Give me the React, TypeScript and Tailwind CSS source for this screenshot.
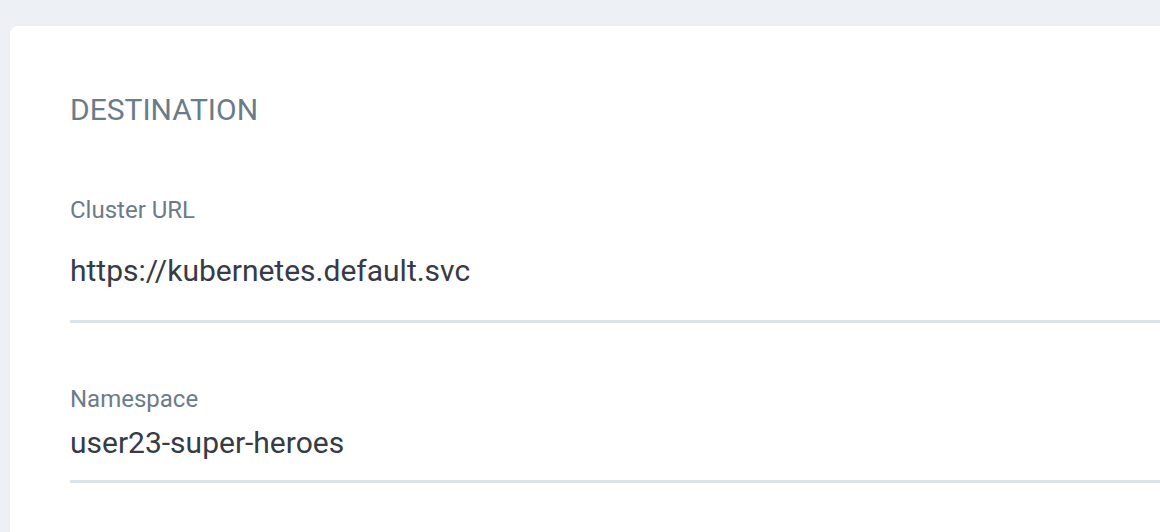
export default function App() {
  const fields = [
    { label: "Cluster URL", value: "https://kubernetes.default.svc" },
    { label: "Namespace", value: "user23-super-heroes" },
  ];

  return (
    <div
      className="h-[532px] w-[1160px] overflow-hidden bg-[#edf0f4] pl-[10px] pt-[26px]"
      style={{ fontFamily: "Roboto, 'Liberation Sans', sans-serif" }}
    >
      <div className="h-[540px] w-[1200px] rounded-[8px] bg-white pl-[60px] pt-[69px]">
        {/* section title */}
        <h2 className="text-[30px] font-normal leading-[30px] text-[#6b7c89]">DESTINATION</h2>

        {/* cluster url */}
        <div className="mt-[73px]">
          <p className="text-[24px] leading-[24px] text-[#6b7c89]">{fields[0].label}</p>
          <p className="mt-[34px] text-[30px] leading-[30px] text-[#363b46]">{fields[0].value}</p>
          <div className="mt-[34px] h-[3px] bg-[#dde3ea]" />
        </div>

        {/* namespace */}
        <div className="mt-[64px]">
          <p className="text-[24px] leading-[24px] text-[#6b7c89]">{fields[1].label}</p>
          <p className="mt-[17px] text-[30px] leading-[30px] text-[#363b46]">{fields[1].value}</p>
          <div className="mt-[22px] h-[3px] bg-[#dde3ea]" />
        </div>
      </div>
    </div>
  );
}
